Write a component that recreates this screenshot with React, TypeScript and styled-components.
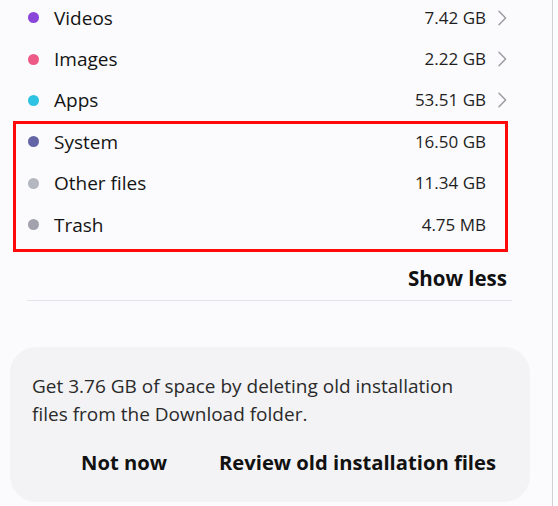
import React from "react";
import styled, { createGlobalStyle } from "styled-components";

const Global = createGlobalStyle`
  html, body { margin: 0; padding: 0; background: #ffffff; }
  body { font-family: "Open Sans", Roboto, "Liberation Sans", sans-serif; -webkit-font-smoothing: antialiased; }
  * { box-sizing: border-box; }
`;

const Page = styled.div`
  width: 553px;
  height: 506px;
  background: #fbfbfd;
  border-right: 1px solid #cfcfd5;
  overflow: hidden;
`;

const List = styled.div`
  margin: -3px 40px 0 27px;
  display: flex;
  flex-direction: column;
`;

const Highlight = styled.div`
  position: relative;
  display: flex;
  flex-direction: column;
  &::after {
    content: "";
    position: absolute;
    top: 0;
    left: -14px;
    right: 4px;
    bottom: -7px;
    border: 3px solid #ff0a0a;
    pointer-events: none;
  }
`;

const Row = styled.div`
  height: 41.4px;
  display: flex;
  align-items: center;
  padding: 0 5px 0 1px;
`;

const Dot = styled.span<{ $c: string }>`
  width: 11px;
  height: 11px;
  border-radius: 50%;
  background: ${(p) => p.$c};
  flex: none;
`;

const Label = styled.span`
  margin-left: 15px;
  font-size: 19px;
  line-height: 24px;
  color: #141414;
  flex: 1;
`;

const Value = styled.span`
  font-size: 17px;
  line-height: 24px;
  color: #1e1e1e;
`;

const Chevron = styled.span<{ $hidden?: boolean }>`
  width: 21px;
  display: flex;
  justify-content: flex-end;
  visibility: ${(p) => (p.$hidden ? "hidden" : "visible")};
`;

const ShowLess = styled.div`
  padding: 22px 5px 11px 0;
  line-height: 22px;
  font-size: 20.5px;
  font-weight: 700;
  color: #111;
  text-align: right;
`;

const Divider = styled.div`
  height: 1px;
  background: #e3e3e8;
`;

const Card = styled.div`
  margin: 46px 22px 0 10px;
  height: 155px;
  border-radius: 26px;
  background: #f3f3f5;
  padding: 25px 8px 18px 22px;
  display: flex;
  flex-direction: column;
`;

const Message = styled.p`
  margin: 0;
  max-width: 455px;
  font-size: 19px;
  line-height: 28px;
  color: #2a2a2a;
`;

const Actions = styled.div`
  margin-top: 12px;
  height: 44px;
  display: flex;
  justify-content: flex-end;
  align-items: center;
`;

const Action = styled.button`
  border: none;
  background: none;
  padding: 0 26px;
  height: 44px;
  font-family: inherit;
  font-size: 20.2px;
  font-weight: 700;
  color: #111;
  white-space: nowrap;
`;

const ChevronIcon = () => (
  <svg width="9" height="16" viewBox="0 0 9 16" fill="none">
    <path d="M1 1.2 L7.6 8 L1 14.8" stroke="#9a9a9f" strokeWidth="1.4" strokeLinecap="round" strokeLinejoin="round" />
  </svg>
);

type Item = { name: string; color: string; size: string; chevron: boolean };

const top: Item[] = [
  { name: "Videos", color: "#8a46d9", size: "7.42 GB", chevron: true },
  { name: "Images", color: "#ee5a86", size: "2.22 GB", chevron: true },
  { name: "Apps", color: "#2fc3e3", size: "53.51 GB", chevron: true },
];

const marked: Item[] = [
  { name: "System", color: "#6465a6", size: "16.50 GB", chevron: false },
  { name: "Other files", color: "#b4b7bf", size: "11.34 GB", chevron: false },
  { name: "Trash", color: "#a2a2ae", size: "4.75 MB", chevron: false },
];

const StorageRow = ({ item }: { item: Item }) => (
  <Row>
    <Dot $c={item.color} />
    <Label>{item.name}</Label>
    <Value>{item.size}</Value>
    <Chevron $hidden={!item.chevron}>
      <ChevronIcon />
    </Chevron>
  </Row>
);

export default function App() {
  return (
    <>
      <Global />
      <Page>
        <List>
          {top.map((i) => (
            <StorageRow key={i.name} item={i} />
          ))}
          <Highlight>
            {marked.map((i) => (
              <StorageRow key={i.name} item={i} />
            ))}
          </Highlight>
          <ShowLess>Show less</ShowLess>
          <Divider />
        </List>
        <Card>
          <Message>
            Get 3.76 GB of space by deleting old installation files from the Download folder.
          </Message>
          <Actions>
            <Action>Not now</Action>
            <Action>Review old installation files</Action>
          </Actions>
        </Card>
      </Page>
    </>
  );
}
